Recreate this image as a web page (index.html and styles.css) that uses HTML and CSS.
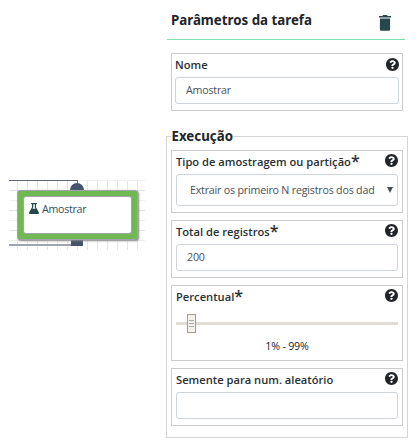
FILE: index.html
```html
<!DOCTYPE html>
<html lang="pt">
<head>
<meta charset="utf-8">
<title>Parâmetros da tarefa</title>
<link rel="stylesheet" href="styles.css">
</head>
<body>
<svg class="defs" width="0" height="0" aria-hidden="true">
  <symbol id="help" viewBox="8 8 496 496"><path fill="currentColor" d="M504 256c0 137-111 248-248 248S8 393 8 256 119 8 256 8s248 111 248 248zM262.700 90c-54.500 0-89.300 23-116.500 63.800-3.500 5.300-2.400 12.400 2.700 16.300l34.700 26.300c5.200 3.900 12.600 3 16.700-2.100 17.900-22.700 30.100-35.800 57.300-35.800 20.400 0 45.700 13.100 45.700 33 0 15-12.400 22.700-32.500 34C247.100 238.500 216 254.900 216 296v4c0 6.600 5.400 12 12 12h56c6.600 0 12-5.400 12-12v-1.300c0-28.500 83.200-29.600 83.200-106.700 0-58-60.200-102-116.500-102zM256 338c-25.400 0-46 20.600-46 46s20.600 46 46 46 46-20.600 46-46-20.600-46-46-46z"/></symbol>
</svg>
<main class="layout">
  <section class="canvas">
    <div class="wire wire-in"></div>
    <div class="wire wire-out"></div>
    <div class="port port-in"></div>
    <div class="port port-out"></div>
    <div class="node">
      <svg class="flask" viewBox="0 0 10 11"><path fill="#23484c" d="M2.200 0h5.600v1.200H7v3l2.800 5c.5 1-.1 1.800-1 1.800H1.200C.3 11-.3 10.200.2 9.200L3 4.200v-3h-.8z"/><path fill="#fff" d="M4.200 1.200h1.600v3.300l.7 1.300H3.500l.7-1.300z"/></svg>
      <span>Amostrar</span>
    </div>
  </section>
  <aside class="panel">
    <header class="panel-head">
      <h1>Parâmetros da tarefa</h1>
      <svg class="trash" viewBox="0 0 12 16"><path fill="#27474a" d="M0 1h3.300l.9-1h3.600l.9 1H12v1.600H0zM.9 3.400h10.200v10.800c0 1-.7 1.600-1.600 1.600h-7c-.9 0-1.600-.6-1.600-1.600z"/></svg>
    </header>
    <div class="card card-name">
      <div class="label"><span>Nome</span><svg><use href="#help"/></svg></div>
      <div class="input">Amostrar</div>
    </div>
    <fieldset class="group">
      <legend>Execução</legend>
      <div class="card">
        <div class="label"><span>Tipo de amostragem ou partição<b>*</b></span><svg><use href="#help"/></svg></div>
        <div class="input select"><span>Extrair os primeiro N registros dos dad</span><i class="arrow"></i></div>
      </div>
      <div class="card">
        <div class="label"><span>Total de registros<b>*</b></span><svg><use href="#help"/></svg></div>
        <div class="input">200</div>
      </div>
      <div class="card card-range">
        <div class="label"><span>Percentual<b>*</b></span><svg><use href="#help"/></svg></div>
        <div class="slider"><div class="thumb"><i></i><i></i><i></i></div></div>
        <div class="range">1% - 99%</div>
      </div>
      <div class="card">
        <div class="label"><span>Semente para num. aleatório</span><svg><use href="#help"/></svg></div>
        <div class="input"></div>
      </div>
    </fieldset>
  </aside>
</main>
</body>
</html>
```
FILE: styles.css
```css
* { box-sizing: border-box; }
body {
  margin: 0;
  background: #fff;
  color: #212529;
  font-family: "Open Sans", "Noto Sans", sans-serif;
  font-size: 10.700px;
  letter-spacing: -0.21px;
}
.defs { position: absolute; }
.layout { display: flex; height: 448px; }

.canvas {
  position: relative;
  width: 136px;
  height: 70px;
  margin: 180px 21px 0 9px;
  background:
    linear-gradient(#e2e2e2 1px, transparent 1px) 0 10px / 100% 20px,
    linear-gradient(#f0f0f0 1px, transparent 1px) 0 0 / 100% 20px,
    linear-gradient(90deg, #e6e6e6 1px, transparent 1px) 8px 0 / 10px 100%;
}
.wire { position: absolute; left: 0; }
.wire-in { top: 0; width: 69px; height: 4px; border-top: 1px solid #5e6878; border-right: 1px solid #5e6878; }
.wire-out { top: 64px; width: 62px; height: 2px; background: #a0a5b3; }
.port { position: absolute; background: #44546a; }
.port-in { left: 61px; top: 3px; width: 14px; height: 14px; border-radius: 50%; }
.port-out { left: 62px; top: 55px; width: 12px; height: 11px; }
.node {
  position: absolute;
  left: 8px;
  top: 10px;
  width: 121px;
  height: 50px;
  padding: 6px;
  border: 1px solid #a3a3ad;
  border-radius: 3px;
  background: #70b852;
  box-shadow: 1px 1px 2px #888;
  display: flex;
}
.node::before {
  content: "";
  position: absolute;
  inset: 5px;
  border: 1px solid #a3a3ad;
  border-radius: 3px;
  background: #fff;
}
.flask { position: relative; width: 10px; height: 11px; margin: 6px 3px 0 5px; }
.node span { position: relative; margin-top: 5px; line-height: 15px; letter-spacing: -0.3px; color: #35505a; }

.panel { width: 242px; }
.panel-head {
  display: flex;
  justify-content: space-between;
  width: 238px;
  height: 40px;
  margin-left: 1px;
  padding: 10px 14px 0 4px;
  border-bottom: 1px solid #84dfb0;
}
h1 { margin: 0; font-family: "Noto Sans", sans-serif; font-size: 13.300px; line-height: 20px; font-weight: 700; white-space: nowrap; letter-spacing: 0; }
.trash { width: 12px; height: 16px; margin-top: 5px; }
.card {
  height: 58px;
  border: 1px solid #ccc;
  padding: 3px 4px 0;
  margin-bottom: 7px;
}
.card-name { width: 232px; margin: 13px 0 0 5px; padding-left: 3px; }
.label {
  display: flex;
  justify-content: space-between;
  height: 20px;
  line-height: 16px;
  font-weight: 600;
  font-size: 11.170px;
  letter-spacing: 0;
  color: #2a2f34;
  white-space: nowrap;
}
.card-name .input { margin-right: -1px; }
.label b { font-size: 16px; line-height: 0; font-weight: 600; vertical-align: -1px; }
.label svg { width: 13px; height: 13px; color: #212529; }
.card-name .label svg { margin: 1px -1px 0 0; }
.input {
  height: 27px;
  border: 1px solid #ced4da;
  border-radius: 3px;
  padding: 0 10px;
  line-height: 24px;
  color: #495057;
}
.select {
  height: 32px;
  display: flex;
  justify-content: space-between;
  padding: 0 4px 0 13px;
  line-height: 30px;
  white-space: nowrap;
}
.arrow { margin-top: 12px; width: 6px; height: 6px; background: #495057; clip-path: polygon(0 0, 100% 0, 50% 100%); }
.group {
  width: 242px;
  height: 311px;
  margin: 16px 0 0;
  padding: 0 4px;
  border: 1px solid #d5d5d5;
}
legend { padding: 0 0 0 0.5px; font-family: "Noto Sans", sans-serif; font-size: 13.300px; line-height: 18px; height: 18px; font-weight: 700; letter-spacing: 0; }
.group .card { width: 232px; }
.group legend + .card { height: 63px; margin-top: 5px; }
.group .card-range { height: 76px; }
.slider { height: 3px; margin-top: 13px; background: #e3dcd5; }
.thumb {
  position: relative;
  left: 11px;
  top: -8px;
  width: 9px;
  height: 19px;
  padding: 5px 1px 0;
  border: 1px solid #a49b92;
  background: #f4f1ed;
}
.thumb i { display: block; height: 1px; margin-bottom: 2px; background: #aaa; }
.range { margin-top: 13px; text-align: center; line-height: 16px; }
```
